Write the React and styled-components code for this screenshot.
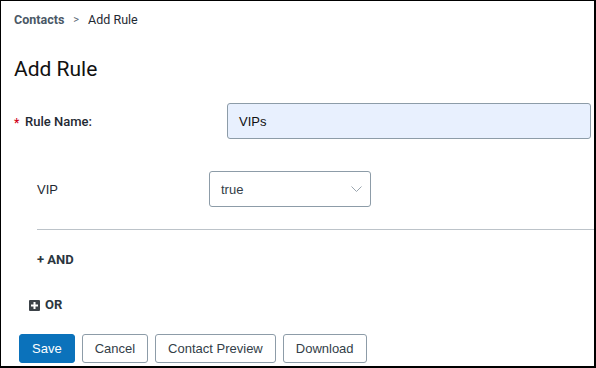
import React from "react";
import styled, { createGlobalStyle } from "styled-components";

const Global = createGlobalStyle`
  html, body { margin: 0; padding: 0; background: #fff; }
  * { box-sizing: border-box; }
`;

const Frame = styled.div`
  width: 596px;
  height: 368px;
  border-style: solid;
  border-color: #000;
  border-width: 1px 2px 2px 1px;
  background: #fff;
  overflow: hidden;
  display: flex;
  flex-direction: column;
  padding: 11px 0 0 13px;
  font-family: "Liberation Sans", Arial, sans-serif;
  color: #1f2a33;
`;

const Breadcrumb = styled.nav`
  display: flex;
  align-items: center;
  gap: 9px;
  font-family: Roboto, "Liberation Sans", sans-serif;
  font-size: 12.5px;
  line-height: 16px;
`;

const Crumb = styled.span`
  font-weight: ${(p) => (p.$link ? 700 : 400)};
  color: ${(p) => (p.$link ? "#4a5866" : "#1f2a33")};
`;

const Sep = styled.span`
  color: #5a6672;
  font-size: 11px;
`;

const Title = styled.h1`
  margin: 27px 0 0 0;
  font-family: Roboto, "Liberation Sans", sans-serif;
  font-weight: 400;
  font-size: 21px;
  line-height: 28px;
  color: #111;
`;

const FieldRow = styled.div`
  display: flex;
  align-items: center;
  margin-top: ${(p) => p.$mt}px;
  padding-left: ${(p) => p.$indent || 0}px;
  padding-right: 3px;
`;

const Label = styled.label`
  width: ${(p) => p.$w}px;
  flex: none;
  display: flex;
  align-items: center;
  font-family: ${(p) => (p.$roboto ? 'Roboto, "Liberation Sans", sans-serif' : '"Liberation Sans", Arial, sans-serif')};
  font-size: 13px;
  font-weight: ${(p) => (p.$roboto ? 500 : 400)};
  color: #1f2a33;
`;

const Req = styled.span`
  color: #d0021b;
  width: 11px;
  font-size: 12px;
  line-height: 10px;
  padding-top: 3px;
`;

const TextInput = styled.div`
  flex: 1;
  height: 36px;
  border: 1px solid #8d9ca8;
  border-radius: 3px;
  background: #e8f0fe;
  display: flex;
  align-items: center;
  padding-left: 11px;
  font-size: 13px;
  color: #111;
`;

const Select = styled.div`
  width: 162px;
  height: 36px;
  border: 1px solid #8d9ca8;
  border-radius: 3px;
  background: #fff;
  display: flex;
  align-items: center;
  justify-content: space-between;
  padding: 0 8px 0 11px;
  font-size: 13px;
  color: #333e48;
`;

const Divider = styled.hr`
  border: none;
  border-top: 1px solid #bcc3c9;
  margin: 22px 0 0 23px;
  height: 0;
`;

const LinkAction = styled.div`
  display: flex;
  align-items: center;
  gap: 5px;
  margin-top: ${(p) => p.$mt}px;
  padding-left: ${(p) => p.$indent}px;
  font-family: Roboto, "Liberation Sans", sans-serif;
  font-weight: 700;
  font-size: 13px;
  line-height: 16px;
  color: #2b3640;
`;

const PlusBox = styled.span`
  width: 11px;
  height: 11px;
  border-radius: 1px;
  background: #3c4248;
  display: inline-flex;
  align-items: center;
  justify-content: center;
`;

const Buttons = styled.div`
  display: flex;
  gap: 7px;
  margin: 21px 0 0 5px;
`;

const Button = styled.button`
  height: 29px;
  padding: 0 12px;
  border-radius: 3px;
  font-family: "Liberation Sans", Arial, sans-serif;
  font-size: 13px;
  border: 1px solid ${(p) => (p.$primary ? "#0b72bb" : "#8d9ca8")};
  background: ${(p) => (p.$primary ? "#0b72bb" : "#fff")};
  color: ${(p) => (p.$primary ? "#fff" : "#333e48")};
  cursor: pointer;
`;

export default function App() {
  return (
    <>
      <Global />
      <Frame>
        <Breadcrumb>
          <Crumb $link>Contacts</Crumb>
          <Sep>&gt;</Sep>
          <Crumb>Add Rule</Crumb>
        </Breadcrumb>
        <Title>Add Rule</Title>
        <FieldRow $mt={20}>
          <Label $w={213} $roboto>
            <Req>*</Req>Rule Name:
          </Label>
          <TextInput>VIPs</TextInput>
        </FieldRow>
        <FieldRow $mt={32} $indent={23}>
          <Label $w={172}>VIP</Label>
          <Select>
            true
            <svg width="11" height="6" viewBox="0 0 11 6" fill="none">
              <path d="M0.5 0.5 L5.5 5.5 L10.5 0.5" stroke="#9aa5ae" strokeWidth="1" />
            </svg>
          </Select>
        </FieldRow>
        <Divider />
        <LinkAction $mt={22} $indent={23}>+ AND</LinkAction>
        <LinkAction $mt={29} $indent={15}>
          <PlusBox>
            <svg width="7" height="7" viewBox="0 0 7 7">
              <path d="M3.5 0 V7 M0 3.5 H7" stroke="#fff" strokeWidth="2" />
            </svg>
          </PlusBox>
          OR
        </LinkAction>
        <Buttons>
          <Button $primary>Save</Button>
          <Button>Cancel</Button>
          <Button>Contact Preview</Button>
          <Button>Download</Button>
        </Buttons>
      </Frame>
    </>
  );
}
